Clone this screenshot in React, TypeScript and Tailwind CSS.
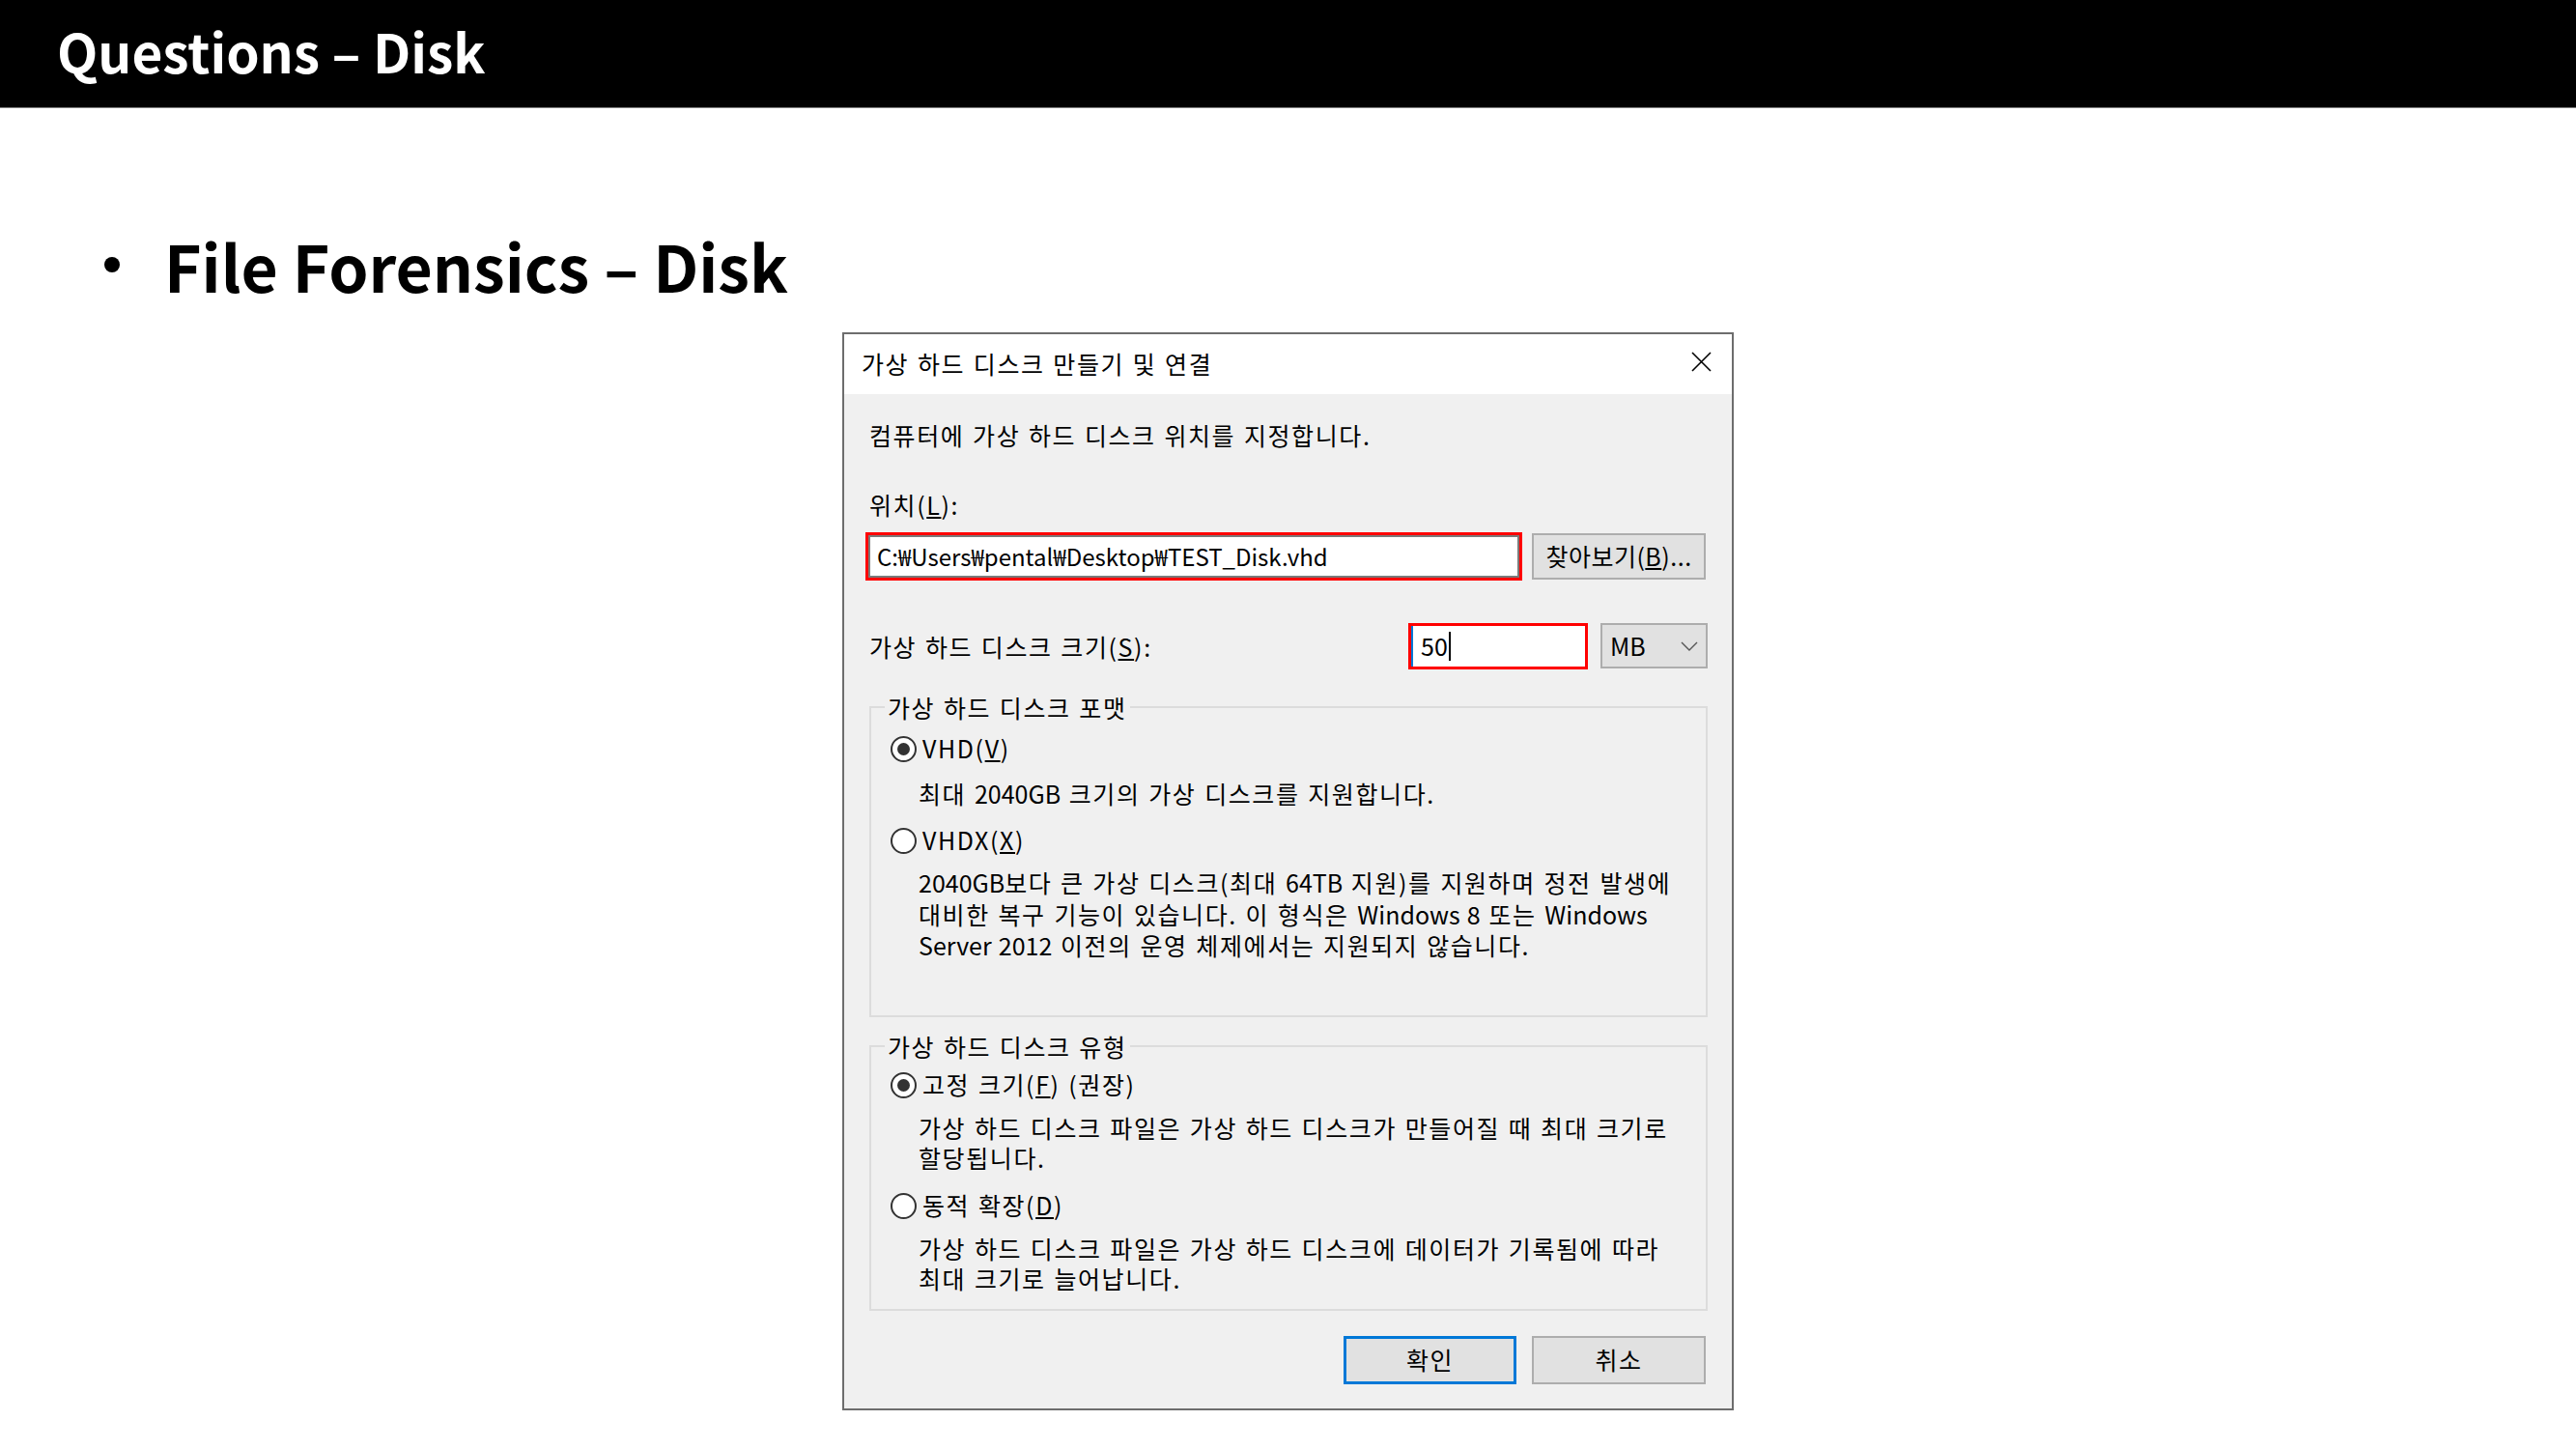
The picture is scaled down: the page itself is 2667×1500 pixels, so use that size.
import React from "react";

const Radio: React.FC<{ checked?: boolean }> = ({ checked }) => (
   <span className="flex h-[27px] w-[27px] shrink-0 items-center justify-center rounded-full border-2 border-[#333333] bg-white">
      {checked && <span className="h-[13px] w-[13px] rounded-full bg-[#333333]" />}
   </span>
);

// latin words run a little tighter than the hangul around them
const Lat: React.FC<{ children: React.ReactNode }> = ({ children }) => <span className="tracking-normal">{children}</span>;

const Group: React.FC<{ title: string; className: string; children: React.ReactNode }> = ({ title, className, children }) => (
   <fieldset className={`border-2 border-[#dcdcdc] ${className}`}>
      <legend className="ml-[14px] px-[3px] leading-[32px]">{title}</legend>
      {children}
   </fieldset>
);

const App: React.FC = () => {
   return (
      <div className="h-[1500px] w-[2667px] overflow-hidden bg-white font-['Noto_Sans_CJK_KR','Noto_Sans',sans-serif] text-black">
         <header className="flex h-[112px] items-center border-b border-[#808080] bg-black pb-[6px] pl-[59px]">
            <h1 className="text-[55px] font-bold leading-none text-white">Questions – Disk</h1>
         </header>

         <div className="mt-[128px] flex h-[68px] items-center pl-[108px]">
            <span className="h-[16px] w-[16px] rounded-full bg-black" />
            <h2 className="ml-[46px] text-[66px] font-bold leading-none">File Forensics – Disk</h2>
         </div>

         {/* dialog */}
         <div className="ml-[872px] mt-[36px] flex h-[1116px] w-[923px] flex-col border-2 border-[#6d6d6d] bg-[#f0f0f0] text-[25px] tracking-[1.6px] [word-spacing:1.5px]">
            <div className="flex h-[62px] shrink-0 items-center justify-between bg-white pl-[18px] pr-[21px]">
               <span>가상 하드 디스크 만들기 및 연결</span>
               <svg width="21" height="21" viewBox="0 0 21 21" className="mb-[5px]">
                  <path d="M1 1L20 20M20 1L1 20" stroke="#000" strokeWidth="1.6" fill="none" />
               </svg>
            </div>

            <div className="flex flex-col pl-[26px] pr-[25px]">
               <p className="mt-[26px] leading-[32px]">컴퓨터에 가상 하드 디스크 위치를 지정합니다.</p>
               <p className="mt-[40px] leading-[32px]">
                  위치(<span className="underline">L</span>):
               </p>

               <div className="mt-[13px] flex h-[50px] items-center">
                  <div className="ml-[-4px] h-[50px] w-[680px] border-[3px] border-[#ff0000] bg-white">
                     <div className="flex h-full items-center border-2 border-[#7a7a7a] pl-[7px] text-[24px] tracking-normal">
                        C:₩Users₩pental₩Desktop₩TEST_Disk.vhd
                     </div>
                  </div>
                  <button className="ml-[10px] h-[48px] w-[180px] border-2 border-[#adadad] bg-[#e1e1e1] tracking-[0.5px]">
                     찾아보기(<span className="underline">B</span>)...
                  </button>
               </div>

               <div className="mt-[43px] flex h-[49px] items-center">
                  <span className="flex-1 leading-[32px]">
                     가상 하드 디스크 크기(<span className="underline">S</span>):
                  </span>
                  <div className="h-[48px] w-[186px] border-[3px] border-[#ff0000] bg-white">
                     <div className="flex h-full items-center border-l-2 border-[#0078d7] pl-[8px] tracking-normal">
                        <span>50</span>
                        <span className="ml-[1px] h-[30px] w-[2px] bg-black" />
                     </div>
                  </div>
                  <div className="ml-[13px] flex h-[47px] w-[111px] items-center justify-between border-2 border-[#adadad] bg-[#e1e1e1] pl-[8px] pr-[8px] tracking-normal">
                     <span>MB</span>
                     <svg width="18" height="10" viewBox="0 0 18 10">
                        <path d="M1 1L9 9L17 1" stroke="#555" strokeWidth="1.4" fill="none" />
                     </svg>
                  </div>
               </div>

               <Group title="가상 하드 디스크 포맷" className="mt-[23px] h-[337px]">
                  <div className="pl-[20px]">
                     <div className="mt-[11px] flex h-[32px] items-center gap-[6px]">
                        <Radio checked />
                        <span>
                           VHD(<span className="underline">V</span>)
                        </span>
                     </div>
                     <p className="ml-[29px] mt-[14px] leading-[32px]">
                        최대 <Lat>2040GB</Lat> 크기의 가상 디스크를 지원합니다.
                     </p>
                     <div className="mt-[17px] flex h-[32px] items-center gap-[6px]">
                        <Radio />
                        <span>
                           VHDX(<span className="underline">X</span>)
                        </span>
                     </div>
                     <p className="ml-[29px] mt-[11px] whitespace-nowrap leading-[32.5px]">
                        <Lat>2040GB</Lat>보다 큰 가상 디스크(최대 <Lat>64TB</Lat> 지원)를 지원하며 정전 발생에
                        <br />
                        대비한 복구 기능이 있습니다. 이 형식은 <Lat>Windows 8</Lat> 또는 <Lat>Windows</Lat>
                        <br />
                        <Lat>Server 2012</Lat> 이전의 운영 체제에서는 지원되지 않습니다.
                     </p>
                  </div>
               </Group>

               <Group title="가상 하드 디스크 유형" className="mt-[14px] h-[290px]">
                  <div className="pl-[20px]">
                     <div className="mt-[8px] flex h-[32px] items-center gap-[6px]">
                        <Radio checked />
                        <span>
                           고정 크기(<span className="underline">F</span>) (권장)
                        </span>
                     </div>
                     <p className="ml-[29px] mt-[13px] whitespace-nowrap leading-[31px]">
                        가상 하드 디스크 파일은 가상 하드 디스크가 만들어질 때 최대 크기로
                        <br />
                        할당됩니다.
                     </p>
                     <div className="mt-[18px] flex h-[32px] items-center gap-[6px]">
                        <Radio />
                        <span>
                           동적 확장(<span className="underline">D</span>)
                        </span>
                     </div>
                     <p className="ml-[29px] mt-[13px] whitespace-nowrap leading-[31px]">
                        가상 하드 디스크 파일은 가상 하드 디스크에 데이터가 기록됨에 따라
                        <br />
                        최대 크기로 늘어납니다.
                     </p>
                  </div>
               </Group>

               <div className="mr-[2px] mt-[26px] flex h-[50px] justify-end gap-[16px]">
                  <button className="h-[50px] w-[179px] border-[3px] border-[#0078d7] bg-[#e1e1e1]">확인</button>
                  <button className="h-[50px] w-[180px] border-2 border-[#adadad] bg-[#e1e1e1]">취소</button>
               </div>
            </div>
         </div>
      </div>
   );
};

export default App;
